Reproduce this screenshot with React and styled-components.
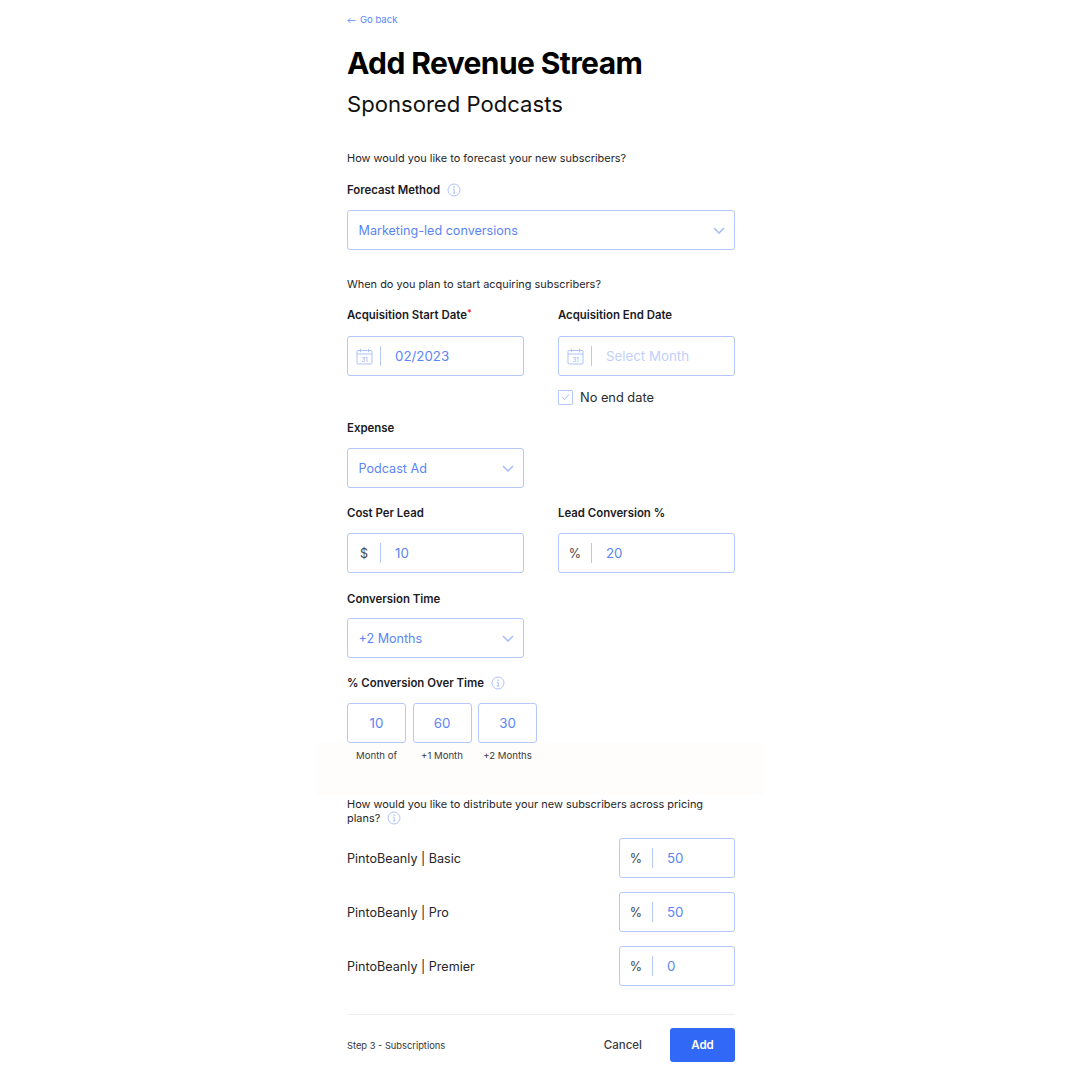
import React from "react";
import styled, { createGlobalStyle } from "styled-components";

const Global = createGlobalStyle`
  html, body { margin: 0; padding: 0; background: #fff; }
  body { font-family: Inter, "Liberation Sans", sans-serif; color: #1b1b1f; }
`;
const BLUE = "#5a85f8";
const BORDER = "#b4c8fb";

const Page = styled.main`
  position: relative;
  width: 388px;
  height: 1080px;
  margin-left: 347px;
`;
const Back = styled.a`
  display: flex;
  align-items: center;
  gap: 4px;
  height: 12px;
  padding-top: 14px;
  font-size: 9.5px;
  line-height: 12px;
  color: ${BLUE};
`;
const Title = styled.h1`
  margin: 17px 0 0;
  font-size: 30px;
  line-height: 40px;
  font-weight: 700;
  letter-spacing: -0.6px;
  color: #000;
`;
const Subtitle = styled.h2`
  margin: 6px 0 0;
  font-size: 22.1px;
  line-height: 30px;
  font-weight: 400;
  color: #111;
`;
const Question = styled.p`
  margin: ${(p) => p.$top}px 0 0;
  font-size: 10.95px;
  line-height: 13px;
  color: #26262a;
  width: 370px;
`;
const Label = styled.div`
  display: flex;
  align-items: center;
  gap: 7px;
  height: 14px;
  font-size: 11.4px;
  line-height: 14px;
  font-weight: 600;
  color: #1b1b1f;
`;
const Required = styled.sup`
  color: #e5263c;
  font-size: 9px;
  line-height: 0;
  margin-left: -7px;
  position: relative;
  top: -2px;
`;
const Section = styled.section`
  margin-top: ${(p) => p.$top}px;
`;
const Box = styled.div`
  display: flex;
  align-items: center;
  box-sizing: border-box;
  width: ${(p) => p.$w || "100%"};
  height: 40px;
  margin-top: ${(p) => p.$mt ?? 0}px;
  padding: 0 9px 0 10.5px;
  border: 1px solid ${BORDER};
  border-radius: 3px;
  background: #fff;
  font-size: ${(p) => p.$size || 12.6}px;
  color: ${BLUE};
`;
const SelectText = styled.span`
  flex: 1;
`;
const Adorn = styled.span`
  display: flex;
  align-items: center;
  justify-content: center;
  width: 22px;
  margin-left: -5.5px;
  color: #44444a;
  font-size: 12.5px;
`;
const Divider = styled.span`
  width: 1px;
  height: 20px;
  background: ${BORDER};
  margin-left: 5px;
  margin-right: 14px;
`;
const Placeholder = styled.span`
  color: #c0d0fb;
`;
const Row = styled.div`
  display: grid;
  grid-template-columns: 177px 177px;
  column-gap: 34px;
`;
const Check = styled.div`
  display: flex;
  align-items: center;
  gap: 7px;
  margin-top: 14px;
  height: 14px;
  font-size: 12.8px;
  color: #2a2a2e;
`;
const CheckBox = styled.span`
  display: flex;
  align-items: center;
  justify-content: center;
  box-sizing: border-box;
  width: 15px;
  height: 15px;
  border: 1px solid ${BORDER};
  border-radius: 1px;
`;
const Months = styled.div`
  display: flex;
  gap: 6.5px;
  margin-top: 13px;
`;
const MonthCol = styled.div`
  display: flex;
  flex-direction: column;
  align-items: center;
  width: 59px;
`;
const MonthBox = styled.div`
  display: flex;
  align-items: center;
  justify-content: center;
  box-sizing: border-box;
  width: 59px;
  height: 40px;
  border: 1px solid ${BORDER};
  border-radius: 3px;
  background: #fff;
  font-size: 13.3px;
  color: ${BLUE};
`;
const Caption = styled.span`
  margin-top: 7px;
  font-size: 9.6px;
  line-height: 12px;
  color: #3a3a40;
  white-space: nowrap;
`;
const Band = styled.div`
  position: absolute;
  left: -31px;
  top: 743px;
  width: 449px;
  height: 52px;
  background: #fefdfb;
`;
const Content = styled.div`
  position: relative;
`;
const InfoLine = styled.span`
  display: inline-flex;
  vertical-align: -3px;
  margin-left: 7px;
`;
const Plans = styled.div`
  display: flex;
  flex-direction: column;
  gap: 14px;
  margin-top: 13px;
`;
const Plan = styled.div`
  display: flex;
  justify-content: space-between;
  align-items: center;
  font-size: 12.6px;
  color: #26262a;
`;
const Foot = styled.footer`
  display: flex;
  align-items: center;
  margin-top: 28px;
  padding-top: 13px;
  border-top: 1px solid #ededf0;
`;
const Step = styled.span`
  flex: 1;
  font-size: 9.3px;
  color: #333338;
`;
const Cancel = styled.button`
  border: 0;
  background: none;
  padding: 0;
  margin-right: 28px;
  font: 500 11.5px Inter, sans-serif;
  color: #3a3a40;
`;
const Add = styled.button`
  width: 65px;
  height: 34px;
  border: 0;
  border-radius: 3px;
  background: #3268f6;
  color: #fff;
  font: 600 11.5px Inter, sans-serif;
`;

const Info = () => (
  <svg width="14" height="14" viewBox="0 0 14 14" fill="none">
    <circle cx="7" cy="7" r="6" stroke="#adc3fb" />
    <path d="M6.2 6.3H7.2V10M6.2 10H8.2" stroke="#8facf8" strokeWidth=".8" />
    <circle cx="7" cy="4.2" r=".7" fill="#8facf8" />
  </svg>
);
const Chevron = () => (
  <svg width="12" height="7" viewBox="0 0 12 7" fill="none">
    <path d="M1 1l5 5 5-5" stroke="#a3bcfa" strokeWidth="1.5" />
  </svg>
);
const Calendar = () => (
  <svg width="17" height="17" viewBox="0 0 17 17" fill="none">
    <rect x="1" y="2.5" width="15" height="13.5" rx="1" stroke="#adc3fb" />
    <path d="M1 6h15M4.5 .8v3.4M12.5 .8v3.4" stroke="#adc3fb" />
    <text x="8.5" y="13.5" fontSize="6" textAnchor="middle" fill="#8facf8" fontFamily="Inter">31</text>
  </svg>
);
const Field = ({ adorn, value, placeholder, w, mt = 0 }) => (
  <Box $w={w} $mt={mt} $size={13.3}>
    <Adorn>{adorn}</Adorn>
    <Divider />
    {placeholder ? <Placeholder>{placeholder}</Placeholder> : value}
  </Box>
);
const Select = ({ value, w, mt = 13 }) => (
  <Box $w={w} $mt={mt}>
    <SelectText>{value}</SelectText>
    <Chevron />
  </Box>
);

export default function App() {
  return (
    <Page>
      <Global />
      <Band />
      <Content>
        <Back>
          <svg width="9" height="7" viewBox="0 0 9 7" fill="none">
            <path d="M8.5 3.5H1M3.5 1L1 3.5 3.5 6" stroke={BLUE} strokeWidth=".8" />
          </svg>
          Go back
        </Back>
        <Title>Add Revenue Stream</Title>
        <Subtitle>Sponsored Podcasts</Subtitle>
        <Question $top={33}>How would you like to forecast your new subscribers?</Question>
        <Section $top={18}>
          <Label>Forecast Method <Info /></Label>
          <Select value="Marketing-led conversions" mt={13} />
        </Section>
        <Question $top={28}>When do you plan to start acquiring subscribers?</Question>
        <Section $top={17}>
          <Row>
            <div>
              <Label>Acquisition Start Date<Required>*</Required></Label>
              <Field mt={14} adorn={<Calendar />} value="02/2023" />
            </div>
            <div>
              <Label>Acquisition End Date</Label>
              <Field mt={14} adorn={<Calendar />} placeholder="Select Month" />
              <Check>
                <CheckBox>
                  <svg width="9" height="8" viewBox="0 0 9 8" fill="none">
                    <path d="M1 4.2l2.4 2.4L8 1.2" stroke="#a3bcfa" strokeWidth="1" />
                  </svg>
                </CheckBox>
                No end date
              </Check>
            </div>
          </Row>
        </Section>
        <Section $top={17}>
          <Label>Expense</Label>
          <Select value="Podcast Ad" w="177px" mt={13} />
        </Section>
        <Section $top={18}>
          <Row>
            <div>
              <Label>Cost Per Lead</Label>
              <Field mt={13} adorn="$" value="10" />
            </div>
            <div>
              <Label>Lead Conversion %</Label>
              <Field mt={13} adorn="%" value="20" />
            </div>
          </Row>
        </Section>
        <Section $top={19}>
          <Label>Conversion Time</Label>
          <Select value="+2 Months" w="177px" mt={12} />
        </Section>
        <Section $top={18}>
          <Label>% Conversion Over Time <Info /></Label>
          <Months>
            {[["10", "Month of"], ["60", "+1 Month"], ["30", "+2 Months"]].map(([v, c]) => (
              <MonthCol key={c}>
                <MonthBox>{v}</MonthBox>
                <Caption>{c}</Caption>
              </MonthCol>
            ))}
          </Months>
        </Section>
        <Question $top={36}>
          How would you like to distribute your new subscribers across pricing plans?
          <InfoLine><Info /></InfoLine>
        </Question>
        <Plans>
          {[["Basic", "50"], ["Pro", "50"], ["Premier", "0"]].map(([n, v]) => (
            <Plan key={n}>
              <span>PintoBeanly | {n}</span>
              <Field adorn="%" value={v} w="116px" />
            </Plan>
          ))}
        </Plans>
        <Foot>
          <Step>Step 3 - Subscriptions</Step>
          <Cancel>Cancel</Cancel>
          <Add>Add</Add>
        </Foot>
      </Content>
    </Page>
  );
}
